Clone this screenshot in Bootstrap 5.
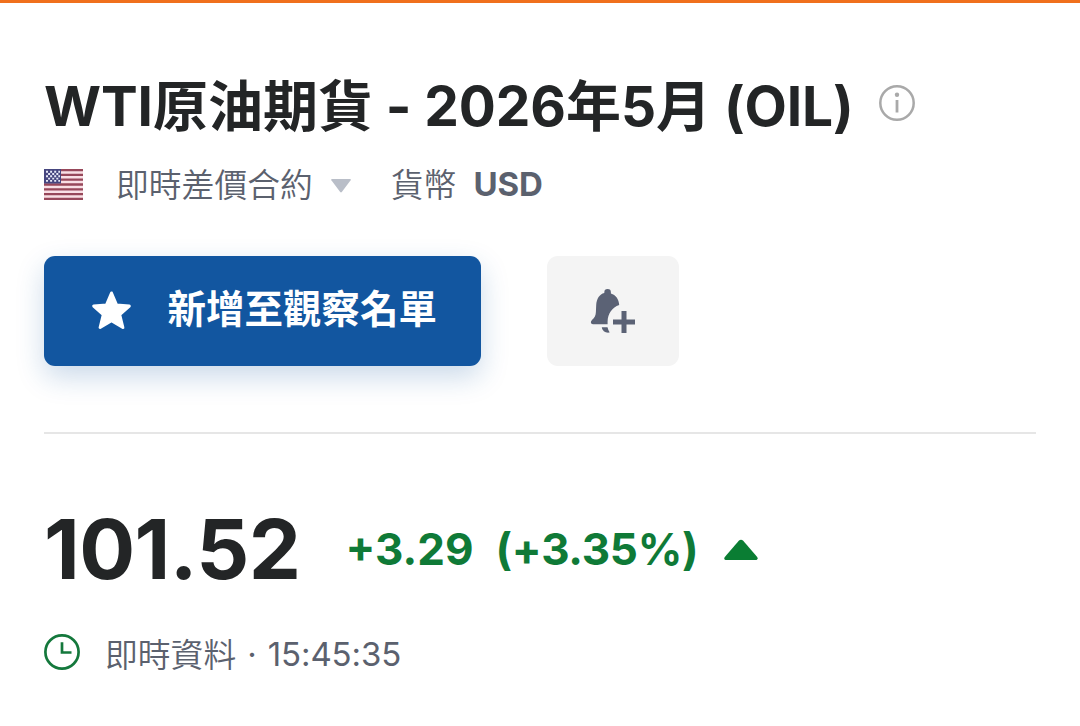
<!DOCTYPE html>
<html lang="zh-Hant">
<head>
<meta charset="utf-8">
<meta name="viewport" content="width=device-width, initial-scale=1">
<title>WTI原油期貨</title>
<link href="https://cdn.jsdelivr.net/npm/bootstrap@5.3.0/dist/css/bootstrap.min.css" rel="stylesheet">
<style>
  body { font-family: Inter, "Noto Sans CJK TC", sans-serif; color: #232526; background: #fff; overflow: hidden; }
  svg { display: block; flex: none; }
  .page { border-top: 3px solid #f0701c; padding: 69px 44px 0; height: 726px; }
  .title { font-size: 55px; line-height: 68px; height: 68px; font-weight: 700; letter-spacing: -.12px; }
  .title b { font-weight: 700; letter-spacing: 0; }
  .info-icon { margin: 0 0 6px 25px; }
  .meta-row { height: 44px; margin-top: 22px; font-size: 33px; line-height: 44px; color: #5b616e; }
  .cjk { font-family: "Noto Sans CJK TC", sans-serif; font-weight: 350; font-size: 32.8px; padding-bottom: 3px; }
  .cfd { margin-left: 33px; }
  .caret { margin: 3px 0 0 18px; }
  .cur { margin-left: 40px; }
  .usd { margin-left: 17px; font-weight: 650; letter-spacing: -.1px; }
  .actions { margin-top: 50px; gap: 66px; }
  .btn-watch { width: 437px; height: 110px; border-radius: 11px; background: #1256a0; color: #fff; font-size: 38.5px; line-height: 56px; font-weight: 700; padding: 0 44px 0 47px; box-shadow: 0 11px 28px rgba(18,86,160,.22); border: 0; }
  .btn-watch:hover { background: #1256a0; color: #fff; }
  .btn-watch .star { margin-bottom: 2px; }
  .btn-watch .label { margin-bottom: 5px; }
  .btn-bell { width: 132px; height: 110px; border-radius: 11px; background: #f4f4f4; border: 0; }
  .rule { height: 2px; background: #e6e6e6; margin-top: 66px; }
  .price-row { height: 100px; margin-top: 65px; line-height: 100px; }
  .price { font-size: 83px; font-weight: 700; letter-spacing: -.6px; }
  .chg { font-size: 44px; font-weight: 700; color: #0f7a37; }
  .diff { margin-left: 45px; }
  .pct { margin-left: 22px; letter-spacing: -.3px; }
  .up { margin: 2px 0 0 26px; }
  .time-row { height: 44px; margin-top: 33px; font-size: 33px; line-height: 44px; color: #5b616e; }
  .clock-icon { margin-bottom: 4px; }
  .live { margin-left: 25px; }
  .dot { margin-left: 11px; }
  .clock { margin-left: 11px; letter-spacing: -.1px; }
</style>
</head>
<body>
<main class="page">
  <div class="d-flex align-items-center">
    <h1 class="title mb-0 text-nowrap">WTI<b>原油期貨</b> - 2026<b>年</b>5<b>月</b> (OIL)</h1>
    <svg class="info-icon" width="36" height="36" viewBox="0 0 36 36"><circle cx="18" cy="18" r="16.7" fill="none" stroke="#a9a9a9" stroke-width="2.5"/><circle cx="18" cy="9.800" r="2.200" fill="#a9a9a9"/><path d="M18 15V27.500" stroke="#a9a9a9" stroke-width="2.8"/></svg>
  </div>

  <div class="meta-row d-flex align-items-center text-nowrap">
    <svg width="39" height="31" viewBox="0 0 39 31">
      <path fill="#f9dfe5" d="M0 0h39v31H0z"/>
      <path stroke="#97475a" stroke-width="2.3" d="M0 1.2h39M0 5.9h39M0 10.7h39M0 15.5h39M0 20.3h39M0 25.1h39M0 29.8h39"/>
      <path fill="#46467f" d="M0 0h17v14.5H0z"/>
      <g stroke="#e6e8f6" stroke-width="1.9" stroke-dasharray="2 2.1"><path d="M2 2.7h14M2 7.3h14M2 11.9h14"/><path d="M4.1 5h11M4.1 9.6h11"/></g>
    </svg>
    <span class="cjk cfd">即時差價合約</span>
    <svg class="caret" width="20" height="14" viewBox="0 0 20 14"><path fill="#b9bec8" d="M.8 0h18.4q1 .2.4 1.2L10.8 13q-.8.8-1.6 0L.4 1.2Q-.2.2.8 0z"/></svg>
    <span class="cjk cur">貨幣</span>
    <span class="usd">USD</span>
  </div>

  <div class="actions d-flex">
    <button type="button" class="btn btn-watch d-flex align-items-center justify-content-between text-nowrap">
      <svg class="star" width="41" height="39" viewBox="0 0 41 39"><path fill="#fff" stroke="#fff" stroke-width="3" stroke-linejoin="round" d="M20.500 2l5 11.900 12.800 1.200-9.600 8.600 3.200 12.800-11.400-6.800-11.400 6.800 3.200-12.800-9.600-8.600 12.800-1.200z"/></svg>
      <span class="label">新增至觀察名單</span>
    </button>
    <button type="button" class="btn btn-bell d-flex align-items-center justify-content-center p-0" aria-label="提醒">
      <svg width="46" height="46" viewBox="590 288 46 46" fill="#5b6275">
        <path d="M604.300 293v-.6a3.300 3.300 0 0 1 6.600 0v1c4.800 1.300 8 5.800 8.300 11.600-7 2.400-11.500 8.800-11.600 16.600v2.700H593c-2.400 0-2.700-2.600-1-4.200 2.700-2.500 3.700-4.500 3.900-8.100l.3-7c.4-6.200 3.300-10.800 8.100-12z"/>
        <path d="M601.800 327.300h5.700c.4 1.900 1.200 3.700 2.200 5.200-4 .8-7.400-1.500-7.900-5.200z"/>
        <path d="M621.500 311h5v8.500h8.500v5h-8.500v8.500h-5v-8.500h-8.500v-5h8.500z"/>
      </svg>
    </button>
  </div>

  <div class="rule"></div>

  <div class="price-row d-flex align-items-center text-nowrap">
    <span class="price">101.52</span>
    <span class="chg diff">+3.29</span>
    <span class="chg pct">(+3.35%)</span>
    <svg class="up" width="34" height="22" viewBox="0 0 34 22"><path fill="#0a7d33" d="M1.500 21Q-.5 20 .8 18L14.800 1.800Q17-.4 19.200 1.800L33.200 18Q34.300 20 32.500 21z"/></svg>
  </div>

  <div class="time-row d-flex align-items-center text-nowrap">
    <svg class="clock-icon" width="36" height="36" viewBox="0 0 36 36" fill="none" stroke="#14783c"><circle cx="18" cy="18" r="16.6" stroke-width="2.700"/><path stroke-width="2.700" d="M18 8.300V18.500h9.500"/></svg>
    <span class="cjk live">即時資料</span><span class="dot">·</span><span class="clock">15:45:35</span>
  </div>
</main>
<script src="https://cdn.jsdelivr.net/npm/bootstrap@5.3.0/dist/js/bootstrap.bundle.min.js"></script>
</body>
</html>
